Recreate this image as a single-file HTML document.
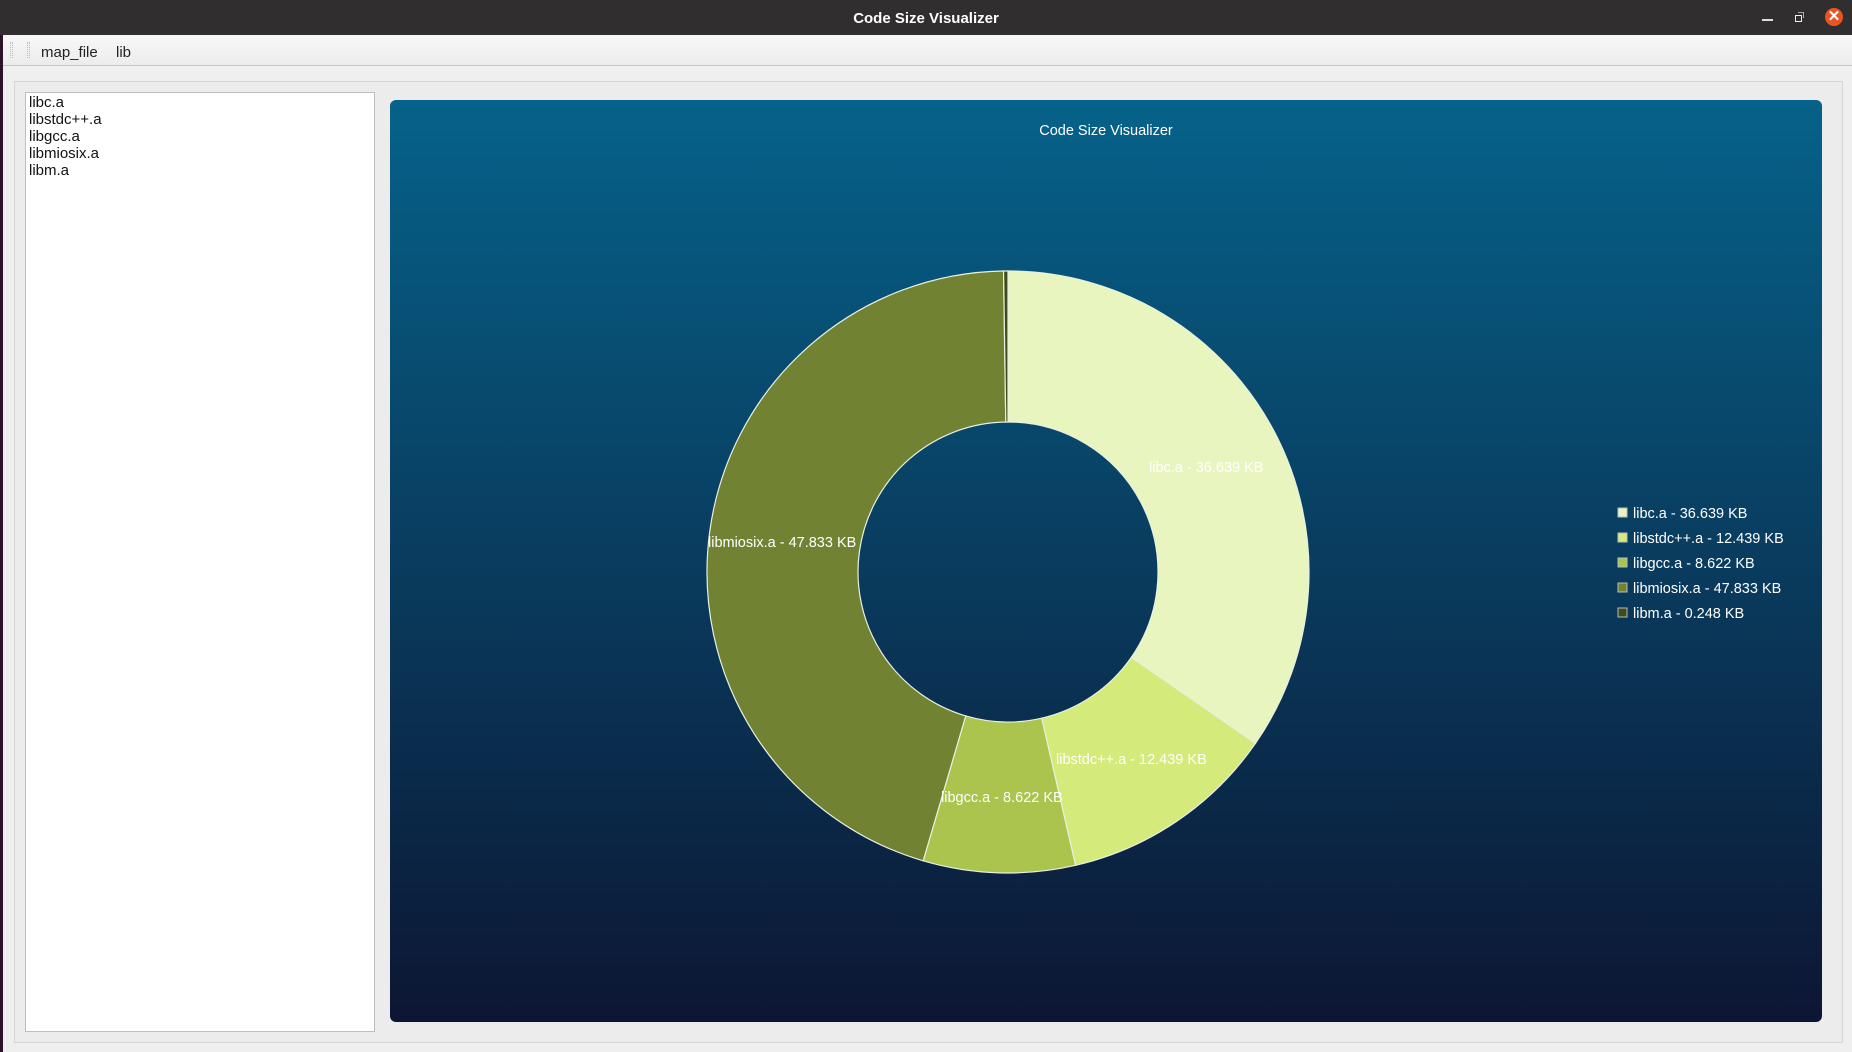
<!DOCTYPE html>
<html><head><meta charset="utf-8">
<style>
*{margin:0;padding:0;box-sizing:border-box}
html,body{width:1852px;height:1052px;overflow:hidden;background:#efefef;font-family:"Liberation Sans",sans-serif}
#tb{position:absolute;left:0;top:0;width:1852px;height:35px;background:#302e2e}
#tb .t{position:absolute;left:0;right:0;top:10px;text-align:center;color:#fff;font-weight:bold;font-size:15px}
#lp{position:absolute;left:0;top:35px;width:3px;height:1017px;background:#2c1428}
#mb{position:absolute;left:3px;top:35px;width:1849px;height:31px;background:linear-gradient(#f8f8f8,#ececec);border-bottom:1px solid #c6c6c6;font-size:15px;color:#222}
#frame{position:absolute;left:14px;top:81px;width:1829px;height:962px;border:1px solid #d6d6d6;background:#ececec}
#list{position:absolute;left:25px;top:92px;width:350px;height:940px;background:#fff;border:1px solid #bdbdbd;font-size:15px;color:#111;padding:1px 0 0 3px;line-height:17px}
#chart{position:absolute;left:390px;top:100px;width:1432px;height:922px;border-radius:6px;background:linear-gradient(#06628a,#0c1633);overflow:hidden}
</style></head><body>
<div id="tb"><div class="t">Code Size Visualizer</div>
<div style="position:absolute;left:1762px;top:19px;width:11px;height:2px;background:#ddd"></div>
<div style="position:absolute;left:1795px;top:15px;width:7px;height:7px;border:1.5px solid #eee"></div>
<div style="position:absolute;left:1798px;top:12px;width:6px;height:6px;border-top:1.5px solid #aaa;border-right:1.5px solid #aaa"></div>
<div style="position:absolute;left:1825px;top:8px;width:18px;height:18px;border-radius:50%;background:#e95420;color:#fff;font-size:15px;line-height:18px;text-align:center;font-weight:bold">✕</div>
</div>
<div id="lp"></div>
<div id="mb">
<div style="position:absolute;left:7px;top:7px;width:3px;height:16px;border-left:1px dotted #bbb;border-right:1px dotted #bbb"></div>
<div style="position:absolute;left:24px;top:7px;width:3px;height:16px;border-left:1px dotted #bbb;border-right:1px dotted #bbb"></div>
<span style="position:absolute;left:38px;top:9px">map_file</span>
<span style="position:absolute;left:113px;top:9px">lib</span>
</div>
<div id="frame"></div>
<div id="list">libc.a<br>libstdc++.a<br>libgcc.a<br>libmiosix.a<br>libm.a</div>
<div id="chart"></div>
<svg width="1852" height="1052" style="position:absolute;left:0;top:0" font-family="Liberation Sans, sans-serif">
<g id="sl" stroke="#e8f0e0" stroke-width="1.2"></g>
<g fill="#fff" font-size="14.5">
<text x="1106" y="135" text-anchor="middle">Code Size Visualizer</text>
<text x="1149" y="472">libc.a - 36.639 KB</text>
<text x="1056" y="764">libstdc++.a - 12.439 KB</text>
<text x="941" y="802">libgcc.a - 8.622 KB</text>
<text x="708" y="547">libmiosix.a - 47.833 KB</text>
</g>
<g font-size="14.5" fill="#fff">
<rect x="1618" y="508" width="9" height="9" fill="#e9f5bf" stroke="#bbb"/><text x="1633" y="518">libc.a - 36.639 KB</text>
<rect x="1618" y="533" width="9" height="9" fill="#d4ea7a" stroke="#bbb"/><text x="1633" y="543">libstdc++.a - 12.439 KB</text>
<rect x="1618" y="558" width="9" height="9" fill="#abc44e" stroke="#bbb"/><text x="1633" y="568">libgcc.a - 8.622 KB</text>
<rect x="1618" y="583" width="9" height="9" fill="#718233" stroke="#bbb"/><text x="1633" y="593">libmiosix.a - 47.833 KB</text>
<rect x="1618" y="608" width="9" height="9" fill="#3f4a1f" stroke="#bbb"/><text x="1633" y="618">libm.a - 0.248 KB</text>
</g>
</svg>
<script>
var v=[36.639,12.439,8.622,47.833,0.248],c=["#e9f5bf","#d4ea7a","#abc44e","#718233","#3f4a1f"];
var T=v.reduce(function(a,b){return a+b}),cx=1008,cy=572,R=301,r=150,a=0,g=document.getElementById("sl"),h="";
function p(ang,rad){var t=ang*Math.PI/180;return (cx+rad*Math.sin(t)).toFixed(2)+" "+(cy-rad*Math.cos(t)).toFixed(2)}
for(var i=0;i<v.length;i++){var b=a+v[i]/T*360,l=(b-a)>180?1:0;
h+='<path fill="'+c[i]+'" d="M'+p(a,R)+' A'+R+' '+R+' 0 '+l+' 1 '+p(b,R)+' L'+p(b,r)+' A'+r+' '+r+' 0 '+l+' 0 '+p(a,r)+' Z"/>';a=b;}
g.innerHTML=h;
</script>
</body></html>
